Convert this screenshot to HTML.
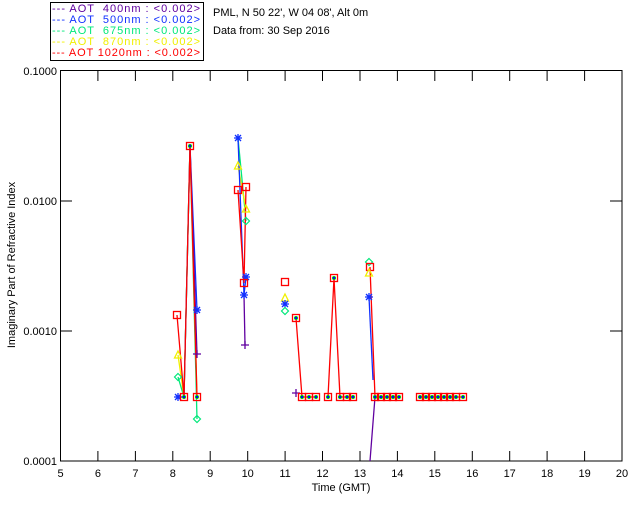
<!DOCTYPE html>
<html><head><style>
body{margin:0;background:#fff;width:640px;height:512px;overflow:hidden}
svg{display:block}
text{font-family:"Liberation Sans",sans-serif;font-size:11px;white-space:pre}
</style></head><body>
<svg width="640" height="512" viewBox="0 0 640 512">
<defs>
<g id="sq"><rect x="-3.5" y="-3.5" width="7" height="7" fill="none" stroke="#f00" stroke-width="1.3"/><circle r="2" fill="#0c0" /><rect x="-1" y="-1" width="2" height="2" fill="#00f"/></g>
<g id="st"><path d="M-4 0H4M0-4V4M-3-3L3 3M-3 3L3-3" stroke="#1030ff" stroke-width="1.3"/></g>
<g id="pl"><path d="M-4 0H4M0-4V4" stroke="#6000a0" stroke-width="1.3"/></g>
<g id="di"><path d="M0-3.5L3.5 0 0 3.5-3.5 0Z" fill="none" stroke="#00e87a" stroke-width="1.2"/></g>
<g id="tr"><path d="M0-4L3.5 3H-3.5Z" fill="none" stroke="#f0f000" stroke-width="1.3"/></g>
<g id="rs"><rect x="-3.5" y="-3.5" width="7" height="7" fill="none" stroke="#f00" stroke-width="1.3"/></g>
</defs>
<!-- legend -->
<rect x="50.5" y="2.5" width="153" height="58" fill="none" stroke="#000"/>
<g font-size="11" xml:space="preserve">
<text x="52" y="12" fill="#6000a0" textLength="148">--- AOT  400nm : &lt;0.002&gt;</text>
<text x="52" y="23" fill="#1030ff" textLength="148">--- AOT  500nm : &lt;0.002&gt;</text>
<text x="52" y="34" fill="#00e87a" textLength="148">--- AOT  675nm : &lt;0.002&gt;</text>
<text x="52" y="45" fill="#f0f000" textLength="148">--- AOT  870nm : &lt;0.002&gt;</text>
<text x="52" y="56" fill="#f00" textLength="148">--- AOT 1020nm : &lt;0.002&gt;</text>
</g>
<text x="213" y="16">PML, N 50 22', W 04 08', Alt 0m</text>
<text x="213" y="34">Data from: 30 Sep 2016</text>
<!-- axes -->
<rect x="60.5" y="70.5" width="561.5" height="390.5" fill="none" stroke="#000"/>
<g stroke="#000">
<path d="M97.9 461v-10M135.4 461v-10M172.8 461v-10M210.2 461v-10M247.7 461v-10M285.1 461v-10M322.5 461v-10M360 461v-10M397.4 461v-10M434.8 461v-10M472.3 461v-10M509.7 461v-10M547.1 461v-10M584.6 461v-10"/>
<path d="M97.9 71v10M135.4 71v10M172.8 71v10M210.2 71v10M247.7 71v10M285.1 71v10M322.5 71v10M360 71v10M397.4 71v10M434.8 71v10M472.3 71v10M509.7 71v10M547.1 71v10M584.6 71v10"/>
<path d="M60 331h12M60 201h12M622 331h-12M622 201h-12"/>
</g>
<g text-anchor="end">
<text x="57" y="465">0.0001</text><text x="57" y="335">0.0010</text><text x="57" y="205">0.0100</text><text x="57" y="75">0.1000</text>
</g>
<g text-anchor="middle">
<text x="60.5" y="477">5</text><text x="97.9" y="477">6</text><text x="135.4" y="477">7</text><text x="172.8" y="477">8</text><text x="210.2" y="477">9</text><text x="247.7" y="477">10</text><text x="285.1" y="477">11</text><text x="322.5" y="477">12</text><text x="360" y="477">13</text><text x="397.4" y="477">14</text><text x="434.8" y="477">15</text><text x="472.3" y="477">16</text><text x="509.7" y="477">17</text><text x="547.1" y="477">18</text><text x="584.6" y="477">19</text><text x="622" y="477">20</text>
<text x="341" y="491">Time (GMT)</text>
<text transform="translate(11 265) rotate(-90)" y="4">Imaginary Part of Refractive Index</text>
</g>
<!-- data lines -->
<g fill="none" stroke-width="1.3">
<path d="M178 377L184 397L190 146L197 419" stroke="#00e87a"/>
<path d="M178 355L184 397L190 146L197 397" stroke="#f0f000"/>
<path d="M178 397L184 397L190 146L197 310" stroke="#1030ff"/>
<path d="M190 146L197 354" stroke="#6000a0"/>
<path d="M177 315L184 397L190 146L197 397" stroke="#f00"/>
<path d="M238 138L246 221" stroke="#00e87a"/>
<path d="M238 166L246 209" stroke="#f0f000"/>
<path d="M238 138L244 295L246 277" stroke="#1030ff"/>
<path d="M244 295L245 345" stroke="#6000a0"/>
<path d="M238 190L244 283L246 187" stroke="#f00"/>
<path d="M296 318L302 397M328 397L334 278L340 397M370 267L375 397" stroke="#f00"/>
<path d="M369 297L373 380" stroke="#1030ff"/>
<path d="M375 397L370 461" stroke="#6000a0"/>
<path d="M302 397H316M340 397H353M375 397H399M420 397H463" stroke="#f00"/>
</g>
<!-- markers -->
<use href="#rs" x="177" y="315"/><use href="#tr" x="178" y="355"/><use href="#di" x="178" y="377"/><use href="#st" x="178" y="397"/>
<use href="#sq" x="184" y="397"/><use href="#sq" x="190" y="146"/>
<use href="#st" x="197" y="310"/><use href="#pl" x="197" y="354"/><use href="#di" x="197" y="419"/><use href="#sq" x="197" y="397"/>
<use href="#st" x="238" y="138"/><use href="#tr" x="238" y="166"/><use href="#rs" x="238" y="190"/><use href="#rs" x="246" y="187"/>
<use href="#tr" x="246" y="209"/><use href="#di" x="246" y="221"/><use href="#st" x="246" y="277"/><use href="#rs" x="244" y="283"/><use href="#st" x="244" y="295"/><use href="#pl" x="245" y="345"/>
<use href="#rs" x="285" y="282"/><use href="#tr" x="285" y="298"/><use href="#st" x="285" y="304"/><use href="#di" x="285" y="311"/>
<use href="#sq" x="296" y="318"/><use href="#pl" x="296" y="393"/>
<use href="#sq" x="302" y="397"/><use href="#sq" x="309" y="397"/><use href="#sq" x="316" y="397"/>
<use href="#sq" x="328" y="397"/><use href="#sq" x="334" y="278"/>
<use href="#sq" x="340" y="397"/><use href="#sq" x="347" y="397"/><use href="#sq" x="353" y="397"/>
<use href="#di" x="369" y="262"/><use href="#rs" x="370" y="267"/><use href="#tr" x="369" y="273"/><use href="#st" x="369" y="297"/>
<use href="#sq" x="375" y="397"/><use href="#sq" x="381" y="397"/><use href="#sq" x="387" y="397"/><use href="#sq" x="393" y="397"/><use href="#sq" x="399" y="397"/>
<use href="#sq" x="420" y="397"/><use href="#sq" x="426" y="397"/><use href="#sq" x="432" y="397"/><use href="#sq" x="438" y="397"/><use href="#sq" x="444" y="397"/><use href="#sq" x="450" y="397"/><use href="#sq" x="456" y="397"/><use href="#sq" x="463" y="397"/>
</svg>
</body></html>
